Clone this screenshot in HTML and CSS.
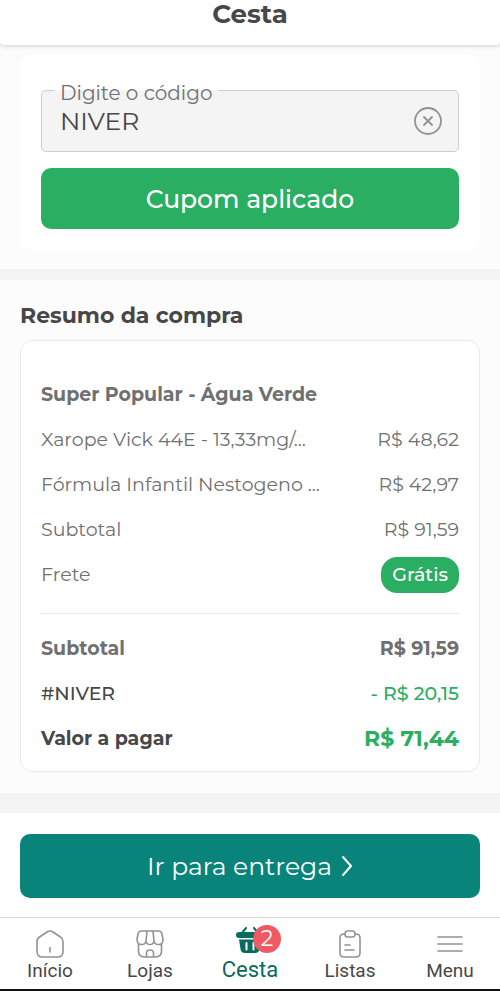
FILE: index.html
```html
<!DOCTYPE html>
<html lang="pt-BR">
<head>
<meta charset="utf-8">
<meta name="viewport" content="width=device-width, initial-scale=1">
<title>Cesta</title>
<link rel="stylesheet" href="styles.css">
</head>
<body>
<header class="topbar"><h1>Cesta</h1></header>
<main>
  <section class="coupon-section">
    <form class="coupon">
      <div class="field">
        <label for="code">Digite o código</label>
        <input id="code" type="text" value="NIVER">
        <button class="clear" type="button" aria-label="Limpar">
          <svg width="28" height="28" viewBox="0 0 28 28"><circle cx="14" cy="14" r="13"/><path d="M10 10l8 8M18 10l-8 8"/></svg>
        </button>
      </div>
      <button class="apply" type="button">Cupom aplicado</button>
    </form>
  </section>
  <section class="summary-section">
    <h2>Resumo da compra</h2>
    <div class="summary">
      <dl>
        <div class="row strong"><dt>Super Popular - Água Verde</dt></div>
        <div class="row"><dt>Xarope Vick 44E - 13,33mg/...</dt><dd>R$ 48,62</dd></div>
        <div class="row"><dt>Fórmula Infantil Nestogeno ...</dt><dd>R$ 42,97</dd></div>
        <div class="row"><dt>Subtotal</dt><dd>R$ 91,59</dd></div>
        <div class="row"><dt>Frete</dt><dd class="pill">Grátis</dd></div>
      </dl>
      <dl class="totals">
        <div class="row strong"><dt>Subtotal</dt><dd>R$ 91,59</dd></div>
        <div class="row discount"><dt>#NIVER</dt><dd>- R$ 20,15</dd></div>
        <div class="row strong pay"><dt>Valor a pagar</dt><dd>R$ 71,44</dd></div>
      </dl>
    </div>
  </section>
  <div class="checkout">
    <button class="next" type="button">Ir para entrega
      <svg width="12" height="22" viewBox="0 0 12 22"><path d="M2 2l8 9-8 9"/></svg>
    </button>
  </div>
</main>
<nav class="tabs">
  <a href="#inicio">
    <svg width="28" height="28" viewBox="0 0 28 28"><path d="M1 11.500Q1 8.500 3.500 7L11 2Q14 0 17 2L24.500 7Q27 8.500 27 11.500V21.500Q27 27 21.500 27H6.500Q1 27 1 21.500ZM14 17.500V22"/></svg>
    <span>Início</span>
  </a>
  <a href="#lojas">
    <svg width="28" height="28" viewBox="0 0 28 28"><path d="M5.500 1H22.500Q25.500 1 26 4L27 9.500C27 13.500 24.500 14.500 22.500 14.500Q18.500 14.500 18 11Q17.500 14.500 14 14.500Q10.500 14.500 10 11Q9.500 14.500 5.500 14.500C3 14.500 1 12.500 1 9.500L2 4Q2.500 1 5.500 1ZM11 1L10 11M17 1L18 11M2.500 14V21Q2.500 27 8.500 27H19.500Q25.500 27 25.500 21V14M10.500 27V23Q10.500 20 14 20Q17.500 20 17.500 23V27"/></svg>
    <span>Lojas</span>
  </a>
  <a class="active" href="#cesta" aria-current="page">
    <svg class="basket" width="28" height="28" viewBox="0 0 28 28"><path class="handle" d="M10 1L5 7M18 1L23 7"/><path class="solid" d="M3 5H25Q28 5 28 8Q28 11 25 11H3Q0 11 0 8Q0 5 3 5ZM3 12.500H25L23.500 22Q23 26 19 26H9Q5 26 4.500 22Z"/><path class="slots" d="M10.500 16V22.500M17.500 16V22.500"/></svg>
    <span>Cesta</span><b class="badge">2</b>
  </a>
  <a href="#listas">
    <svg width="28" height="28" viewBox="0 0 28 28"><path d="M9 4H8Q4 4 4 8V23Q4 27 8 27H20Q24 27 24 23V8Q24 4 20 4H19M11.500 1H16.500Q19 1 19 4Q19 7 16.500 7H11.500Q9 7 9 4Q9 1 11.500 1ZM9 15H14M9 20H18"/></svg>
    <span>Listas</span>
  </a>
  <a href="#menu">
    <svg width="28" height="28" viewBox="0 0 28 28"><path d="M2 7H26M2 14H26M2 21H26"/></svg>
    <span>Menu</span>
  </a>
</nav>
</body>
</html>
```
FILE: styles.css
```css
* { box-sizing: border-box; }

body {
  margin: 0;
  min-height: 100vh;
  display: flex;
  flex-direction: column;
  background: #f4f4f4;
  color: #474747;
  font-family: Montserrat, Inter, sans-serif;
  font-size: 19px;
  font-weight: 500;
  line-height: 28px;
}

h1, h2, dl, dd { margin: 0; }
button { border: 0; padding: 0; font: inherit; cursor: pointer; }

svg {
  fill: none;
  stroke: #929292;
  stroke-width: 2;
  stroke-linecap: round;
  stroke-linejoin: round;
}

.topbar {
  position: relative;
  padding-bottom: 17px;
  background: #fff;
  border-radius: 0 0 4px 4px;
  box-shadow: 0 1px 4px rgba(0, 0, 0, 0.18);
  text-align: center;
}

h1 { font-size: 26px; line-height: 28px; }

.coupon-section {
  padding: 10px 20px 19px;
  background: #fcfcfc;
}

.coupon {
  display: grid;
  gap: 16px;
  padding: 35px 21px 21px;
  background: #fff;
  border-radius: 12px;
}

.field { position: relative; }

.field label {
  position: absolute;
  top: -8px;
  left: 13px;
  padding: 0 6px;
  background: linear-gradient(#fff 8px, #f4f4f4 8px);
  color: #707070;
  font-size: 20px;
  font-weight: 400;
  line-height: 22px;
}

.field input {
  display: block;
  width: 100%;
  height: 62px;
  padding: 2px 60px 2px 18px;
  border: 1px solid #cecece;
  border-radius: 5px;
  background: #f4f4f4;
  color: #474747;
  font: inherit;
  font-size: 25px;
  font-weight: 400;
}

.clear {
  position: absolute;
  top: 17px;
  right: 17px;
  height: 28px;
  background: none;
}

.clear svg { display: block; stroke-width: 1.8; }

.apply, .next {
  width: 100%;
  border-radius: 10px;
  color: #fff;
  font-size: 25px;
}

.apply { height: 61px; background: #2aae61; }

.summary-section {
  margin: 11px 0 20px;
  padding: 22px 20px 21px;
  background: #fcfcfc;
}

h2 { margin-bottom: 10px; font-size: 22px; line-height: 28px; }

.summary {
  padding: 31px 20px 10px;
  border: 1px solid #e9e9e9;
  border-radius: 12px;
  background: #fff;
}

.row {
  display: flex;
  align-items: center;
  justify-content: space-between;
  height: 45px;
  color: #707070;
  font-weight: 400;
}

.row dd { white-space: nowrap; }
.row.strong { font-weight: 700; }

.pill {
  padding: 4px 11px;
  border-radius: 16px;
  background: #2aae61;
  color: #fff;
  font-weight: 500;
}

.totals {
  margin-top: 16px;
  padding-top: 12px;
  border-top: 1px solid #e9e9e9;
}

.row.discount { font-weight: 500; }
.discount, .pay { color: #474747; }
.discount dd, .pay dd { color: #2aae61; }
.pay dd { font-size: 22px; }

.checkout { padding: 21px 20px 19px; background: #fff; }

.next {
  display: flex;
  align-items: center;
  justify-content: center;
  gap: 9px;
  height: 64px;
  background: #08847b;
  font-weight: 400;
}

.next svg { stroke: #fff; }

.tabs {
  flex: 1;
  display: grid;
  grid-template-columns: repeat(5, 1fr);
  border-top: 1px solid #d8d8d8;
  border-bottom: 2px solid #111;
  background: #fff;
  font-family: Roboto, sans-serif;
  font-size: 19px;
  font-weight: 400;
}

.tabs a {
  position: relative;
  display: flex;
  flex-direction: column;
  align-items: center;
  padding-top: 12px;
  color: #474747;
  text-decoration: none;
  line-height: 26px;
}

.tabs svg { flex: none; stroke-width: 1.6; }
.tabs .active { padding-top: 9px; color: #086b5d; font-size: 22px; line-height: 30px; }
.basket .handle { stroke: #086b5d; stroke-width: 2; }
.basket .solid { fill: #086b5d; stroke: none; }
.basket .slots { stroke: #fff; stroke-width: 2; }

.badge {
  position: absolute;
  top: 7px;
  left: calc(50% + 3px);
  width: 28px;
  border-radius: 50%;
  background: #f05a62;
  color: #fff;
  font: 22px/28px Montserrat, Inter, sans-serif;
  text-align: center;
}
```
